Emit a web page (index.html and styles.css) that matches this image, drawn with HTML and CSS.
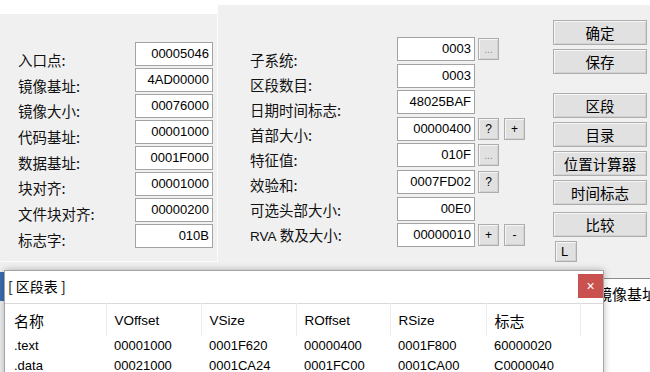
FILE: index.html
```html
<!DOCTYPE html>
<html lang="zh-CN">
<head>
  <meta charset="UTF-8" />
  <title>PE 编辑器</title>
  <link rel="stylesheet" href="styles.css">
</head>
<body>
  <div class="screen">
    <div class="dialog">
      <div class="left-panel">
        <div class="labels">
          <div>入口点:</div>
          <div>镜像基址:</div>
          <div>镜像大小:</div>
          <div>代码基址:</div>
          <div>数据基址:</div>
          <div>块对齐:</div>
          <div>文件块对齐:</div>
          <div>标志字:</div>
        </div>
        <div class="fields">
          <div class="field">00005046</div>
          <div class="field">4AD00000</div>
          <div class="field">00076000</div>
          <div class="field">00001000</div>
          <div class="field">0001F000</div>
          <div class="field">00001000</div>
          <div class="field">00000200</div>
          <div class="field">010B</div>
        </div>
      </div>

      <div class="right-panel">
        <div class="labels mid-labels">
          <div>子系统:</div>
          <div>区段数目:</div>
          <div>日期时间标志:</div>
          <div>首部大小:</div>
          <div>特征值:</div>
          <div>效验和:</div>
          <div>可选头部大小:</div>
          <div><span class="latin">RVA</span> 数及大小:</div>
        </div>
        <div class="fields mid-fields">
          <div class="field-row"><div class="field">0003</div><button class="mini dim">...</button></div>
          <div class="field-row"><div class="field">0003</div></div>
          <div class="field-row"><div class="field">48025BAF</div></div>
          <div class="field-row"><div class="field">00000400</div><button class="mini">?</button><button class="mini">+</button></div>
          <div class="field-row"><div class="field">010F</div><button class="mini dim">...</button></div>
          <div class="field-row"><div class="field">0007FD02</div><button class="mini">?</button></div>
          <div class="field-row"><div class="field">00E0</div></div>
          <div class="field-row"><div class="field">00000010</div><button class="mini">+</button><button class="mini">-</button></div>
        </div>
        <div class="actions">
          <button class="action">确定</button>
          <button class="action">保存</button>
          <button class="action spaced">区段</button>
          <button class="action">目录</button>
          <button class="action">位置计算器</button>
          <button class="action">时间标志</button>
          <button class="action nudge">比较</button>
          <button class="small-l">L</button>
        </div>
      </div>
    </div>

    <!-- windows behind the section table -->
    <div class="back-window blue-window"></div>
    <div class="back-window side-window">镜像基址</div>

    <div class="popup">
      <div class="popup-title">[ 区段表 ]</div>
      <button class="close">&#215;</button>
      <table class="sections">
        <colgroup>
          <col style="width:101px"><col style="width:95px"><col style="width:95px">
          <col style="width:94px"><col style="width:96px"><col style="width:94px"><col>
        </colgroup>
        <thead>
          <tr>
            <th class="cjk">名称</th>
            <th>VOffset</th>
            <th>VSize</th>
            <th>ROffset</th>
            <th>RSize</th>
            <th class="cjk">标志</th>
            <th class="blank"></th>
          </tr>
        </thead>
        <tbody>
          <tr><td>.text</td><td>00001000</td><td>0001F620</td><td>00000400</td><td>0001F800</td><td>60000020</td><td></td></tr>
          <tr><td>.data</td><td>00021000</td><td>0001CA24</td><td>0001FC00</td><td>0001CA00</td><td>C0000040</td><td></td></tr>
        </tbody>
      </table>
    </div>
  </div>
</body>
</html>
```

FILE: styles.css
```css
/* page */
html, body {
  margin: 0;
  padding: 0;
  background: #fff;
  color: #000;
  font-family: "Noto Sans CJK SC", "Liberation Sans", sans-serif;
}

.screen {
  position: relative;
  width: 650px;
  height: 372px;
  overflow: hidden;
}

/* dialog body */
.dialog {
  display: grid;
  grid-template-columns: 218px 1fr;
  align-items: start;
  height: 367px;
  border-top: 5px solid #fff;
  background: #f0f0f0;
}

.left-panel {
  display: flex;
  height: 247px;
  border-top: 9px solid #fff;
  border-right: 1px solid #fbfbfb;
  border-bottom: 1px solid #fbfbfb;
  box-sizing: content-box;
}

.right-panel {
  display: flex;
}

/* labels */
.labels {
  font-size: 14.5px;
  color: #111;
}
.labels div {
  height: 25.7px;
  line-height: 25.7px;
  white-space: nowrap;
}
.left-panel .labels {
  width: 117px;
  padding: 33px 0 0 18px;
}
.mid-labels {
  width: 147px;
  padding: 42px 0 0 32px;
}
.mid-labels div {
  height: 25px;
  line-height: 25px;
}
.latin {
  font-family: "Liberation Sans", sans-serif;
  font-size: 13.5px;
}

/* hex fields */
.fields {
  display: flex;
  flex-direction: column;
  gap: 2px;
  padding-top: 28px;
}
.mid-fields {
  width: 156px;
  padding-top: 32px;
  gap: 2.6px;
}
.field {
  box-sizing: border-box;
  width: 78px;
  height: 24px;
  padding-right: 3px;
  border: 1px solid #a3a3a3;
  background: #fff;
  text-align: right;
  font-family: "Liberation Sans", sans-serif;
  font-size: 13px;
  line-height: 22px;
}
.field-row {
  display: flex;
  align-items: center;
}

/* buttons */
button {
  box-sizing: border-box;
  padding: 0;
  border: 1px solid #adadad;
  background: #e1e1e1;
  color: #000;
  box-shadow: inset 1px 1px 0 #f6f6f6, inset -1px -1px 0 #d2d2d2;
  font-family: inherit;
  cursor: default;
}
.mini {
  width: 21px;
  height: 22px;
  margin-left: 3px;
  font-family: "Liberation Sans", sans-serif;
  font-size: 12px;
}
.mini + .mini {
  margin-left: 5px;
}
.mini.dim {
  color: #8a8a8a;
  font-size: 10px;
}

.actions {
  display: flex;
  flex-direction: column;
  gap: 4px;
  width: 94px;
  padding-top: 15px;
}
.action {
  width: 94px;
  height: 25px;
  font-size: 14.5px;
  line-height: 22px;
}
.action.spaced {
  margin-top: 15px;
}
.action.nudge {
  margin-top: 3px;
}
.small-l {
  width: 22px;
  height: 21px;
  margin-left: 2px;
  font-family: "Liberation Sans", sans-serif;
  font-size: 13px;
  text-align: left;
  padding-left: 5px;
}

/* windows behind */
.back-window {
  position: absolute;
}
.blue-window {
  left: 0;
  top: 272px;
  width: 8px;
  height: 29px;
  background: #3b6db3;
}
.side-window {
  left: 596px;
  top: 278px;
  width: 70px;
  height: 100px;
  border-top: 1px solid #8c8c8c;
  background: #fff;
  padding: 5px 0 0 1px;
  box-sizing: border-box;
  font-size: 15px;
  line-height: 20px;
  white-space: nowrap;
}

/* section table popup */
.popup {
  position: absolute;
  left: 4px;
  top: 270px;
  width: 600px;
  height: 110px;
  box-sizing: border-box;
  border: 1px solid #a5a5a5;
  background: #fff;
  box-shadow: 0 0 7px rgba(0, 0, 0, 0.28);
  z-index: 2;
}
.popup-title {
  height: 32px;
  padding-left: 3px;
  line-height: 31px;
  font-size: 14px;
}
.close {
  position: absolute;
  top: 3px;
  right: 0;
  width: 25px;
  height: 24px;
  border: none;
  box-shadow: none;
  background: #c9514f;
  color: #fff;
  font-family: "Liberation Sans", sans-serif;
  font-size: 14px;
  line-height: 22px;
}

.sections {
  width: 598px;
  table-layout: fixed;
  border-collapse: collapse;
  border-top: 1px solid #d9d9d9;
  font-family: "Liberation Sans", sans-serif;
  font-size: 13px;
}
.sections th {
  height: 32px;
  padding: 0 0 0 8px;
  border-right: 1px solid #ececec;
  text-align: left;
  font-weight: normal;
  font-size: 13.5px;
}
.sections th.cjk {
  font-family: "Noto Sans CJK SC", sans-serif;
  font-size: 15px;
}
.sections th:first-child,
.sections td:first-child {
  padding-left: 9px;
}
.sections th.blank {
  border-right: none;
}
.sections td {
  height: 20px;
  padding: 0 0 0 8px;
  line-height: 20px;
  white-space: nowrap;
}
```
